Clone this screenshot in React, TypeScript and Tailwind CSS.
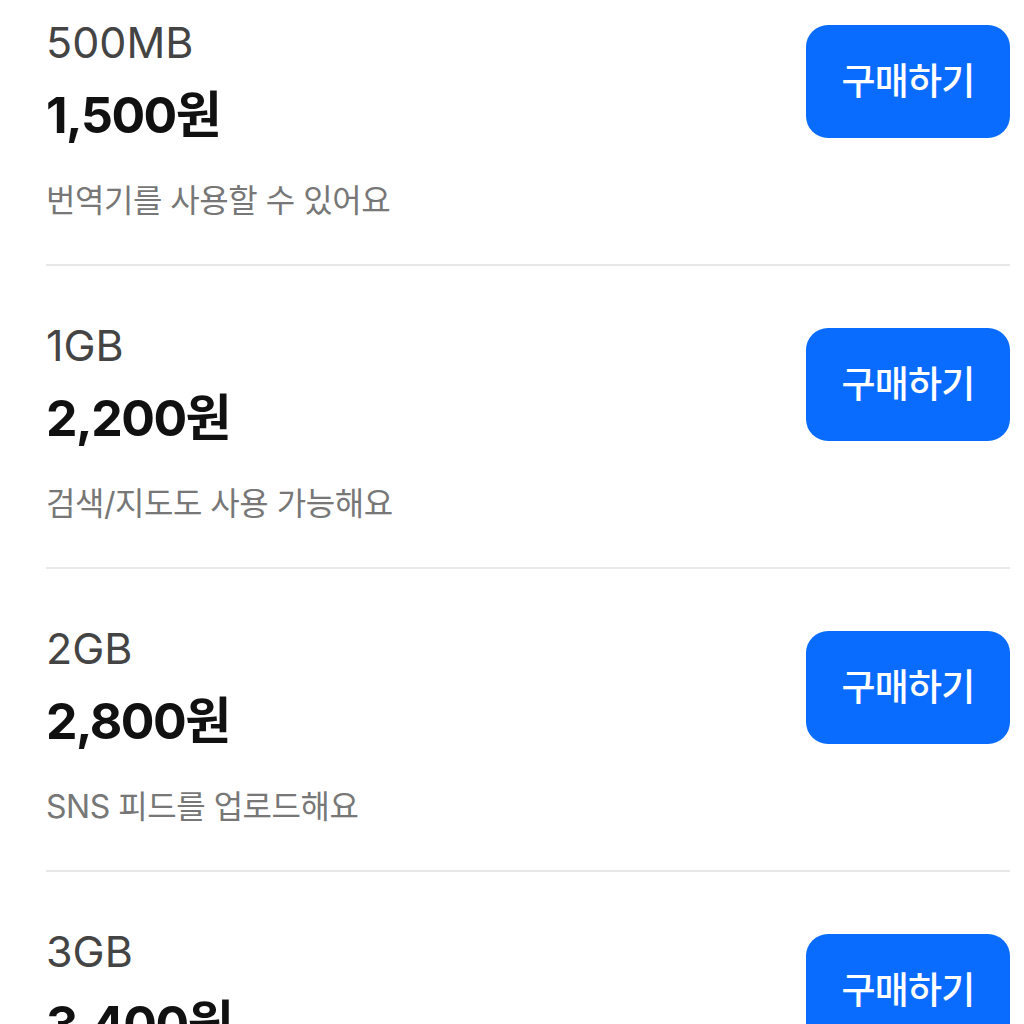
const plans = [
  { size: '500MB', price: '1,500원', desc: '번역기를 사용할 수 있어요' },
  { size: '1GB', price: '2,200원', desc: '검색/지도도 사용 가능해요' },
  { size: '2GB', price: '2,800원', desc: 'SNS 피드를 업로드해요' },
  { size: '3GB', price: '3,400원', desc: '영상도 조금 볼 수 있어요' },
];

function PlanRow({ size, price, desc }: { size: string; price: string; desc: string }) {
  return (
    <div className="flex items-start justify-between pt-[62px] pb-[45px] border-b-2 border-[#e8e8e8]">
      <div className="-mt-[4px] flex flex-col">
        <span className="text-[43px] leading-[43px] text-[#444]">{size}</span>
        <span className="mt-[25px] text-[50px] leading-[52px] font-bold text-[#111] tracking-[-0.03em]">{price}</span>
        <span className="mt-[42px] text-[32px] leading-[36px] text-[#777] tracking-[-0.015em]">{desc}</span>
      </div>
      <button className="w-[204px] h-[113px] rounded-[22px] bg-[#0a6cff] text-white text-[37px] font-medium tracking-[-0.02em]">
        구매하기
      </button>
    </div>
  );
}

export default function App() {
  return (
    <div
      className="h-[1024px] overflow-hidden bg-white pl-[46px] pr-[14px]"
      style={{ fontFamily: 'Inter, "Noto Sans CJK KR", sans-serif' }}
    >
      <div className="-mt-[37px]">
        {plans.map((p) => (
          <PlanRow key={p.size} {...p} />
        ))}
      </div>
    </div>
  );
}
